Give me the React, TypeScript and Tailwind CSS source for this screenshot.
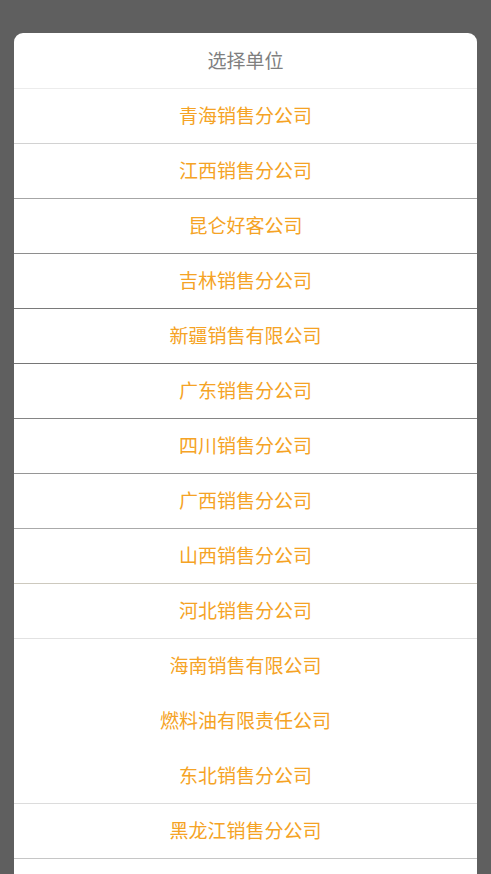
import React from "react";

const items: { name: string; border: string }[] = [
  { name: "青海销售分公司", border: "border-[#ececec]" },
  { name: "江西销售分公司", border: "border-[#d2d2d2]" },
  { name: "昆仑好客公司", border: "border-[#a6a6a6]" },
  { name: "吉林销售分公司", border: "border-[#8e8e8e]" },
  { name: "新疆销售有限公司", border: "border-[#7a7a7a]" },
  { name: "广东销售分公司", border: "border-[#767676]" },
  { name: "四川销售分公司", border: "border-[#858585]" },
  { name: "广西销售分公司", border: "border-[#969696]" },
  { name: "山西销售分公司", border: "border-[#aaaaaa]" },
  { name: "河北销售分公司", border: "border-[#cdc9be]" },
  { name: "海南销售有限公司", border: "border-[#e2e2e2]" },
  { name: "燃料油有限责任公司", border: "border-transparent" },
  { name: "东北销售分公司", border: "border-transparent" },
  { name: "黑龙江销售分公司", border: "border-[#dcdcdc]" },
];

export default function App() {
  return (
    <div
      className="h-[874px] overflow-hidden bg-[#5f5f5f] px-[14px] pt-[33px]"
      style={{ fontFamily: '"Noto Sans CJK SC", "Noto Sans", sans-serif' }}
    >
      <div className="rounded-t-[9px] bg-white pb-[40px]">
        <div className="flex h-[55px] items-center justify-center text-[19px] text-[#7f7f7f]">
          选择单位
        </div>
        {items.map((it) => (
          <div
            key={it.name}
            className={`flex h-[55px] items-center justify-center border-t pb-[1px] text-[19px] text-[#f5a325] ${it.border}`}
          >
            {it.name}
          </div>
        ))}
        <div className="border-t border-[#c6c6c6]" />
      </div>
    </div>
  );
}
